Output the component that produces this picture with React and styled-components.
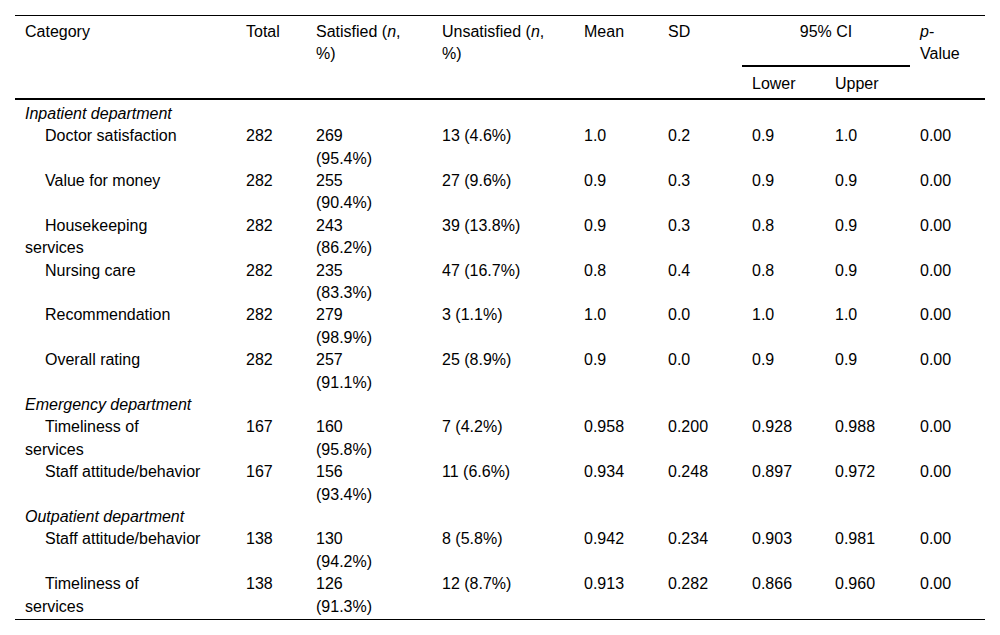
import React from "react";
import styled, { createGlobalStyle } from "styled-components";

const groups = [
  {
    name: "Inpatient department",
    rows: [
      ["Doctor satisfaction", 282, [269, "95.4%"], "13 (4.6%)", "1.0", "0.2", "0.9", "1.0", "0.00"],
      ["Value for money", 282, [255, "90.4%"], "27 (9.6%)", "0.9", "0.3", "0.9", "0.9", "0.00"],
      ["Housekeeping\nservices", 282, [243, "86.2%"], "39 (13.8%)", "0.9", "0.3", "0.8", "0.9", "0.00"],
      ["Nursing care", 282, [235, "83.3%"], "47 (16.7%)", "0.8", "0.4", "0.8", "0.9", "0.00"],
      ["Recommendation", 282, [279, "98.9%"], "3 (1.1%)", "1.0", "0.0", "1.0", "1.0", "0.00"],
      ["Overall rating", 282, [257, "91.1%"], "25 (8.9%)", "0.9", "0.0", "0.9", "0.9", "0.00"],
    ],
  },
  {
    name: "Emergency department",
    rows: [
      ["Timeliness of\nservices", 167, [160, "95.8%"], "7 (4.2%)", "0.958", "0.200", "0.928", "0.988", "0.00"],
      ["Staff attitude/behavior", 167, [156, "93.4%"], "11 (6.6%)", "0.934", "0.248", "0.897", "0.972", "0.00"],
    ],
  },
  {
    name: "Outpatient department",
    rows: [
      ["Staff attitude/behavior", 138, [130, "94.2%"], "8 (5.8%)", "0.942", "0.234", "0.903", "0.981", "0.00"],
      ["Timeliness of\nservices", 138, [126, "91.3%"], "12 (8.7%)", "0.913", "0.282", "0.866", "0.960", "0.00"],
    ],
  },
];

const widths = [221, 70, 126, 142, 84, 84, 83, 85, 75];

const App = () => {
  return (
    <>
      <GlobalStyle />
      <Page>
        <Table>
          <colgroup>
            {widths.map((w, i) => (
              <col key={i} style={{ width: w }} />
            ))}
          </colgroup>
          <thead>
            <tr>
              <Head>Category</Head>
              <Head>Total</Head>
              <Head>
                Satisfied (<i>n</i>,{"\n"}%)
              </Head>
              <Head>
                Unsatisfied (<i>n</i>,{"\n"}%)
              </Head>
              <Head>Mean</Head>
              <Head>SD</Head>
              <Head colSpan={2} $center $rule>
                95% CI
              </Head>
              <Head>
                <i>p</i>-{"\n"}Value
              </Head>
            </tr>
            <tr>
              <SubHead />
              <SubHead />
              <SubHead />
              <SubHead />
              <SubHead />
              <SubHead />
              <SubHead>Lower</SubHead>
              <SubHead>Upper</SubHead>
              <SubHead />
            </tr>
          </thead>
          {groups.map((g, gi) => (
            <tbody key={g.name}>
              <tr>
                <GroupCell colSpan={9} $first={gi === 0}>
                  {g.name}
                </GroupCell>
              </tr>
              {g.rows.map((r, ri) => {
                const last = gi === groups.length - 1 && ri === g.rows.length - 1;
                return (
                  <tr key={ri}>
                    <Cell $indent $last={last}>
                      {r[0]}
                    </Cell>
                    <Cell $last={last}>{r[1]}</Cell>
                    <Cell $last={last}>
                      {r[2][0]}
                      {"\n"}({r[2][1]})
                    </Cell>
                    {r.slice(3).map((v, i) => (
                      <Cell key={i} $last={last}>
                        {v}
                      </Cell>
                    ))}
                  </tr>
                );
              })}
            </tbody>
          ))}
        </Table>
      </Page>
    </>
  );
};

const GlobalStyle = createGlobalStyle`
  body {
    margin: 0;
    background: #ffffff;
    font-family: "Liberation Sans", Arial, sans-serif;
    font-size: 16px;
    color: #000000;
  }
`;
const Page = styled.div`
  padding: 15px 15px;
`;
const Table = styled.table`
  width: 970px;
  table-layout: fixed;
  border-collapse: separate;
  border-spacing: 0;
  border-top: 1px solid #000;
  border-bottom: 1px solid #000;
  line-height: 22.4px;
  font-size: 16px;
`;
const Head = styled.th`
  padding: 5px 10px 1px;
  font-weight: normal;
  text-align: ${(p) => (p.$center ? "center" : "left")};
  vertical-align: top;
  white-space: pre-line;
  border-bottom: ${(p) => (p.$rule ? "2px solid #000" : "none")};
  i {
    font-style: italic;
  }
`;
const SubHead = styled.th`
  padding: 6px 10px 3px;
  font-weight: normal;
  text-align: left;
  vertical-align: top;
  border-bottom: 2px solid #000;
`;
const GroupCell = styled.td`
  padding: ${(p) => (p.$first ? "2.5px" : "0")} 10px 0;
  font-style: italic;
  text-align: left;
`;
const Cell = styled.td`
  padding: 0 10px ${(p) => (p.$last ? "1px" : "0")};
  vertical-align: top;
  text-align: left;
  white-space: pre-line;
  text-indent: ${(p) => (p.$indent ? "20px" : "0")};
`;

export default App;
